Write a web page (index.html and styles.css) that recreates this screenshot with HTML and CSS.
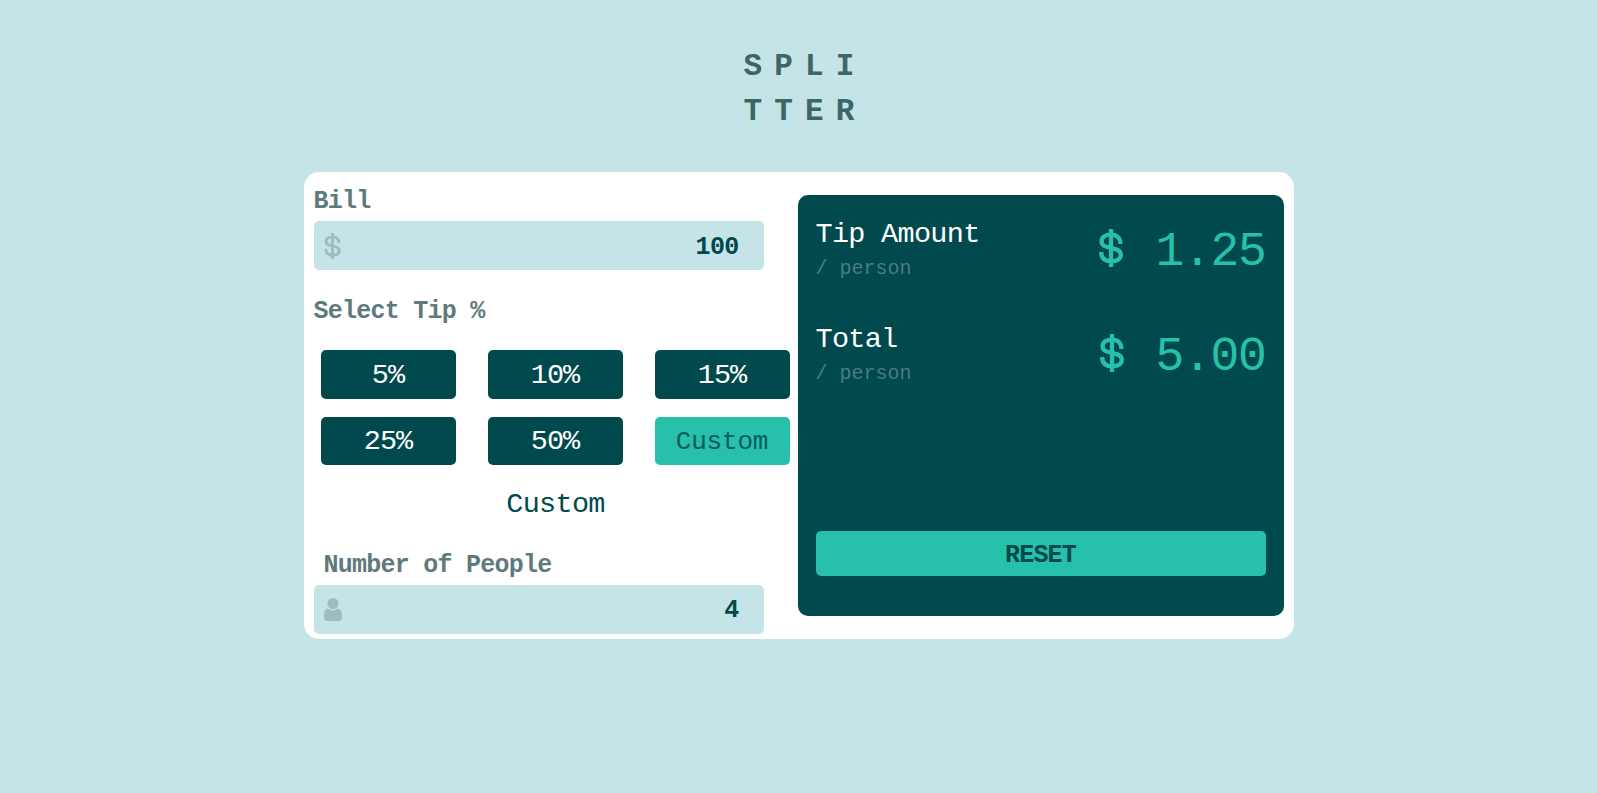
FILE: index.html
```html
<!DOCTYPE html>
<html lang="en">
<head>
<meta charset="utf-8">
<title>Splitter</title>
<link rel="stylesheet" href="styles.css">
</head>
<body>
<svg class="sprite" aria-hidden="true">
  <symbol id="dollar" viewBox="0 0 24 38">
    <path d="M21.400 15C21.400 9 18 5.700 12 5.700S2.600 8.500 2.600 12.300C2.600 16.500 6 17.700 12 18.900S21.800 21.500 21.800 25.800C21.800 30 18 32.300 12 32.300S2.200 29.500 2.200 23M12 0V38" fill="none" stroke="currentColor" stroke-width="4.300"/>
  </symbol>
  <symbol id="person" viewBox="0 0 18 23">
    <circle cx="9" cy="5.500" r="5.500"/>
    <path d="M4 10.500Q9 14.500 14 10.500C17 11.200 18 14.500 18 18.500 18 21.500 16.800 23 14.500 23h-11C1.200 23 0 21.500 0 18.500 0 14.500 1 11.200 4 10.500Z"/>
  </symbol>
</svg>
<h1 class="title">SPLI<br>TTER</h1>
<main class="card">
  <section class="form">
    <label class="label">Bill</label>
    <div class="field"><svg class="field-icon dollar"><use href="#dollar"/></svg><span class="value">100</span></div>
    <h2 class="label tip-label">Select Tip %</h2>
    <div class="tips">
      <button class="tip">5%</button>
      <button class="tip">10%</button>
      <button class="tip">15%</button>
      <button class="tip">25%</button>
      <button class="tip">50%</button>
      <button class="tip custom">Custom</button>
    </div>
    <p class="chosen">Custom</p>
    <label class="label people-label">Number of People</label>
    <div class="field people"><svg class="field-icon person"><use href="#person"/></svg><span class="value">4</span></div>
  </section>
  <section class="results">
    <div class="result">
      <div><h3 class="result-name">Tip Amount</h3><p class="per">/ person</p></div>
      <div class="amount"><svg class="amount-icon"><use href="#dollar"/></svg><span>1.25</span></div>
    </div>
    <div class="result">
      <div><h3 class="result-name">Total</h3><p class="per">/ person</p></div>
      <div class="amount total"><svg class="amount-icon"><use href="#dollar"/></svg><span>5.00</span></div>
    </div>
    <button class="reset">RESET</button>
  </section>
</main>
</body>
</html>
```
FILE: styles.css
```css
* { box-sizing: border-box; margin: 0; padding: 0; }
body {
  min-height: 793px;
  padding-top: 44px;
  background: #c5e4e7;
  color: #00494d;
  font-family: "Liberation Mono", monospace;
  display: flex;
  flex-direction: column;
  align-items: center;
}
.sprite { display: none; }
button { border: 0; font-family: inherit; }
.title {
  padding-left: 13px;
  font-size: 31px;
  line-height: 45px;
  letter-spacing: 12.1px;
  color: #3d6666;
}
.card {
  width: 990px;
  height: 467px;
  margin-top: 38px;
  padding: 0 10px;
  background: #fff;
  border-radius: 15px;
  display: grid;
  grid-template-columns: 484px 486px;
}
.form { padding-top: 15px; display: flex; flex-direction: column; }
.label {
  font-size: 25px;
  font-weight: 700;
  line-height: 30px;
  letter-spacing: -0.75px;
  color: #5e7a7d;
}
.field {
  width: 450px;
  height: 49px;
  margin-top: 4px;
  padding: 0 25px 0 10px;
  background: #c5e4e7;
  border-radius: 5px;
  display: flex;
  align-items: center;
  justify-content: space-between;
}
.field-icon { color: #9fbcbf; fill: #9fbcbf; }
.dollar { width: 17px; height: 26px; }
.person { width: 18px; height: 23px; }
.value {
  padding-top: 5px;
  font-size: 25px;
  font-weight: 700;
  line-height: 30px;
  letter-spacing: -0.7px;
}
.people .value { padding-top: 3px; }
.tip-label { margin-top: 27px; }
.tips {
  margin: 23px 0 0 7px;
  display: grid;
  grid-template-columns: repeat(3, 135px);
  grid-template-rows: 49px 48px;
  gap: 18px 32px;
}
.tip {
  padding-top: 1px;
  background: #00494d;
  color: #fff;
  border-radius: 5px;
  font-size: 28.5px;
  letter-spacing: -0.9px;
}
.custom {
  background: #26c0ab;
  color: #0b5c5c;
  font-size: 26px;
  letter-spacing: -0.2px;
}
.chosen {
  margin-top: 22px;
  font-size: 28.5px;
  line-height: 36px;
  letter-spacing: -0.7px;
  text-align: center;
}
.people-label { margin: 28px 0 0 10px; }
.people { margin-top: 4px; }
.results {
  height: 421px;
  margin-top: 23px;
  padding: 22px 18px 0;
  background: #00494d;
  border-radius: 10px;
}
.result { height: 105px; display: flex; justify-content: space-between; }
.result-name {
  color: #fff;
  font-size: 28.5px;
  font-weight: 400;
  line-height: 36px;
  letter-spacing: -0.7px;
}
.per {
  margin-top: 3px;
  color: #4a7d80;
  font-size: 20px;
  line-height: 26px;
}
.amount {
  height: 56px;
  margin-top: 7px;
  color: #26c0ab;
  font-size: 48px;
  line-height: 56px;
  letter-spacing: -1.3px;
  display: flex;
  gap: 32px;
}
.amount-icon { width: 24px; height: 38px; margin-top: 5px; }
.total { gap: 31px; }
.reset {
  width: 100%;
  height: 45px;
  margin-top: 104px;
  padding-top: 4px;
  background: #26c0ab;
  color: #00494d;
  border-radius: 5px;
  font-size: 25px;
  font-weight: 700;
  letter-spacing: -0.8px;
}
```
